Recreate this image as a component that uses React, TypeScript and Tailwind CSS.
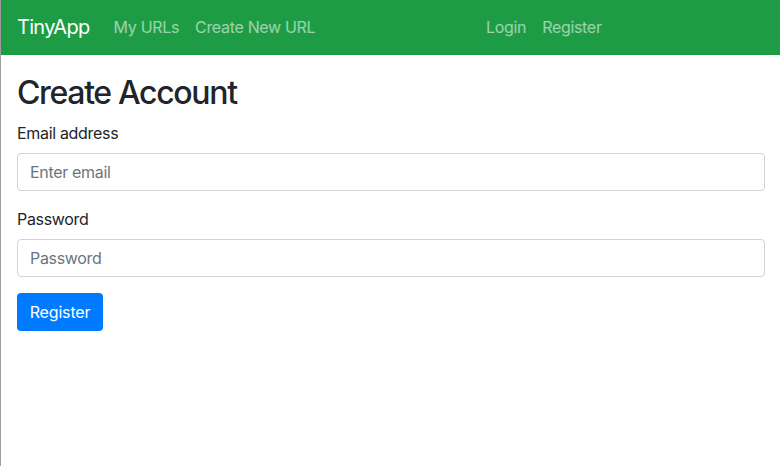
export default function App() {
  return (
    <div className="min-h-screen border-l border-[#9c9c9c] bg-white font-['Inter','Liberation_Sans',sans-serif] tracking-[-0.02em] text-[#212529]">
      <nav className="flex h-[55px] items-center bg-[#1e9c45] pb-[2px] pl-4 pr-4">
        <div className="flex w-[461px] shrink-0 items-center">
          <span className="mr-4 text-[20px] leading-[30px] tracking-[-0.035em] text-white">TinyApp</span>
          <ul className="flex items-center">
            <li className="px-2 text-base leading-6 text-white/55">My URLs</li>
            <li className="px-2 text-base leading-6 text-white/55">Create New URL</li>
          </ul>
        </div>
        <ul className="flex items-center">
          <li className="px-2 text-base leading-6 text-white/55">Login</li>
          <li className="px-2 text-base leading-6 text-white/55">Register</li>
        </ul>
      </nav>

      <div className="pl-4 pr-[15px] pt-[19px]">
        <h1 className="mb-[9px] text-[32px] leading-[1.2] font-medium tracking-[-0.042em]">Create Account</h1>
        <form>
          <div className="mb-4">
            <label className="mb-2 block text-base leading-6">Email address</label>
            <input
              type="email"
              placeholder="Enter email"
              className="block h-[38px] w-full rounded border border-[#ced4da] px-3 text-base text-[#495057] placeholder:text-[#6c757d] outline-none"
            />
          </div>
          <div className="mb-4">
            <label className="mb-2 block text-base leading-6">Password</label>
            <input
              type="password"
              placeholder="Password"
              className="block h-[38px] w-full rounded border border-[#ced4da] px-3 text-base text-[#495057] placeholder:text-[#6c757d] outline-none"
            />
          </div>
          <button
            type="button"
            className="h-[38px] w-[86px] rounded bg-[#007bff] text-base leading-6 tracking-[-0.01em] text-white"
          >
            Register
          </button>
        </form>
      </div>
    </div>
  );
}
